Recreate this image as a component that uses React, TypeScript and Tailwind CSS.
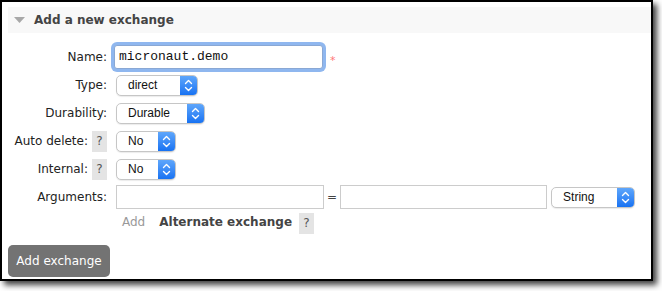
import React from 'react';

const verdana = "font-['DejaVu_Sans',Verdana,sans-serif]";

function Help() {
  return (
    <span className="ml-[4px] inline-flex h-[21px] w-[15px] items-center justify-center bg-[#e4e4e4] text-[12px] text-[#555]">
      ?
    </span>
  );
}

function Select({ value, width }: { value: string; width: number }) {
  return (
    <div
      className="flex h-[21px] items-stretch overflow-hidden rounded-[5px] border border-[#c6c6c6] bg-white shadow-[0_1px_1px_rgba(0,0,0,0.08)]"
      style={{ width }}
    >
      <span className="flex flex-1 items-center pl-[11px] font-['Liberation_Sans',Arial,sans-serif] text-[12px] text-[#111]">
        {value}
      </span>
      <span className="flex w-[17px] items-center justify-center bg-gradient-to-b from-[#5ea6fb] to-[#1672f2]">
        <svg width="9" height="13" viewBox="0 0 9 13" fill="none" stroke="white" strokeWidth="1.4" strokeLinecap="round" strokeLinejoin="round">
          <path d="M1.5 4.5 L4.5 1.5 L7.5 4.5" />
          <path d="M1.5 8.5 L4.5 11.5 L7.5 8.5" />
        </svg>
      </span>
    </div>
  );
}

function Row({ label, help, children }: { label: string; help?: boolean; children: React.ReactNode }) {
  return (
    <div className="flex h-[28px] items-center">
      <div className="flex w-[99px] items-center justify-end text-[12px] text-[#222]">
        <span>{label}</span>
        {help && <Help />}
      </div>
      <div className="ml-[9px] flex items-center">{children}</div>
    </div>
  );
}

export default function App() {
  return (
    <div className="h-[291px] w-[662px] bg-white">
      <div className={`h-[281px] w-[653px] border-2 border-black bg-white pl-[6px] pt-[5px] shadow-[4px_4px_6px_rgba(0,0,0,0.75)] ${verdana}`}>
        {/* header */}
        <div className="flex h-[26px] items-center bg-[#f8f8f8] pl-[6px]">
          <svg width="11" height="6" viewBox="0 0 11 6">
            <path d="M0 0 H11 L5.5 6 Z" fill="#a8a8a8" />
          </svg>
          <span className="ml-[9px] text-[12px] font-bold text-[#444]">Add a new exchange</span>
        </div>

        <div className="mt-[10px]">
          <Row label="Name:">
            <div className="ml-[-2px] flex h-[24px] w-[209px] items-center rounded-[3px] border border-[#8aa8d4] bg-white pl-[4px] shadow-[0_0_0_3px_#8fb7ef] font-['Liberation_Mono','DejaVu_Sans_Mono',monospace] text-[13px] text-[#111]">
              micronaut.demo
            </div>
            <span className="ml-[7px] translate-y-[4px] text-[11px] text-[#f77]">*</span>
          </Row>
          <Row label="Type:">
            <Select value="direct" width={82} />
          </Row>
          <Row label="Durability:">
            <Select value="Durable" width={89} />
          </Row>
          <Row label="Auto delete:" help>
            <Select value="No" width={60} />
          </Row>
          <Row label="Internal:" help>
            <Select value="No" width={60} />
          </Row>
          <Row label="Arguments:">
            <div className="h-[24px] w-[208px] border border-[#cccccc] bg-white" />
            <span className="mx-[3px] text-[12px] text-[#444]">=</span>
            <div className="h-[24px] w-[207px] border border-[#cccccc] bg-white" />
            <div className="ml-[4px]">
              <Select value="String" width={84} />
            </div>
          </Row>
          <div className="flex h-[22px] items-center pl-[114px]">
            <span className="text-[12px] text-[#999]">Add</span>
            <span className="ml-[14px] text-[12px] font-bold text-[#444]">Alternate exchange</span>
            <span className="ml-[3px]">
              <Help />
            </span>
          </div>
        </div>

        <button className="mt-[12px] flex h-[32px] w-[102px] items-center justify-center rounded-[5px] bg-[#737373] text-[12px] text-white">
          Add exchange
        </button>
      </div>
    </div>
  );
}
